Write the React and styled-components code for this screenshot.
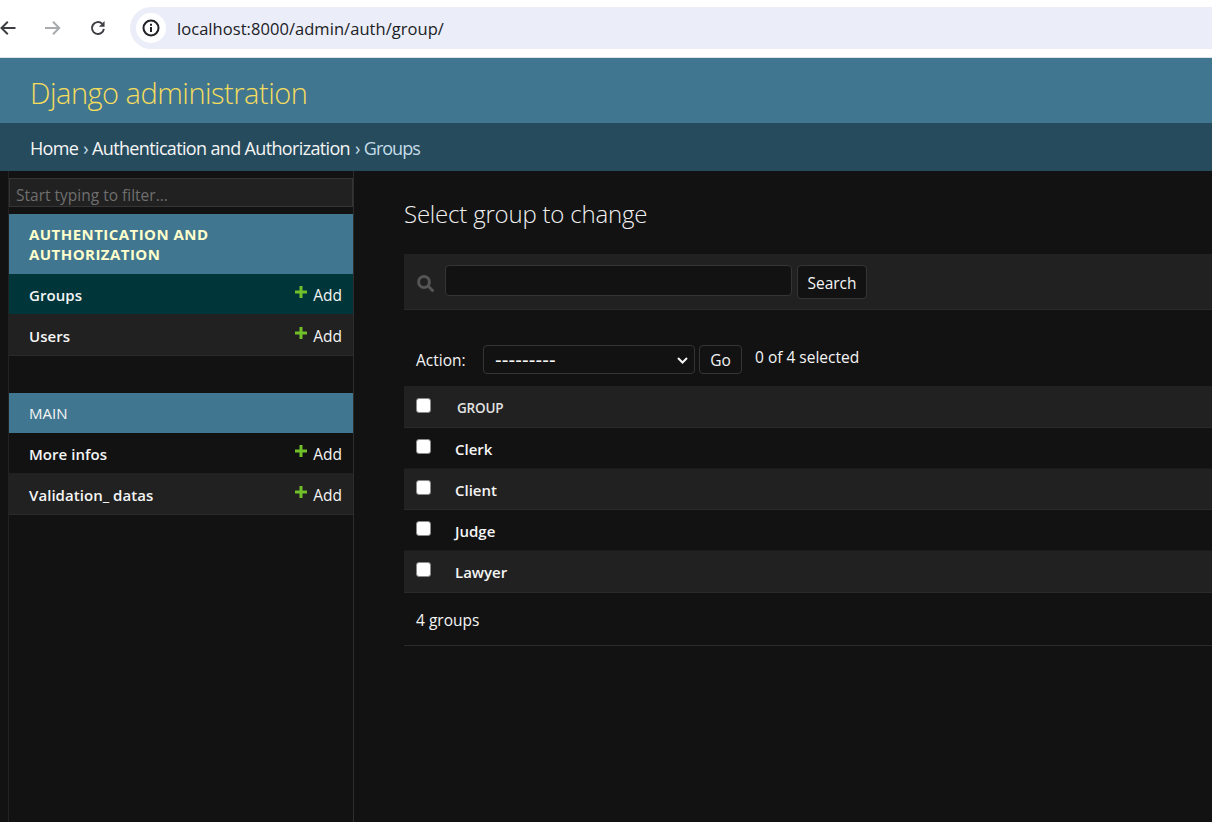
import React from "react";
import styled, { createGlobalStyle } from "styled-components";

const GlobalStyle = createGlobalStyle`
  html, body {
    margin: 0;
    height: 100%;
    overflow: hidden;
    background: #121212;
    font-family: "Open Sans", "Noto Sans", sans-serif;
    color: #f5f5f5;
  }
  * { box-sizing: border-box; }
`;

const Page = styled.div`
  width: 1212px;
  height: 822px;
  display: flex;
  flex-direction: column;
  overflow: hidden;
`;

const BrowserBar = styled.div`
  height: 58px;
  flex: none;
  background: #fff;
  border-bottom: 1px solid #dfe3e8;
  display: flex;
  align-items: flex-start;
  padding-top: 7px;
`;

const NavIcons = styled.div`
  width: 130px;
  height: 42px;
  flex: none;
  display: flex;
  align-items: center;
  gap: 29px;
`;

const Omnibox = styled.div`
  flex: 1;
  height: 42px;
  margin-right: -40px;
  padding-left: 6px;
  border-radius: 21px;
  background: #ebeef8;
  display: flex;
  align-items: center;
  gap: 11px;
`;

const InfoBadge = styled.div`
  width: 30px;
  height: 30px;
  border-radius: 50%;
  background: #fff;
  display: flex;
  align-items: center;
  justify-content: center;
`;

const Url = styled.span`
  font-size: 16.5px;
  letter-spacing: 0.05px;
  color: #202124;
`;

const Header = styled.header`
  height: 65px;
  flex: none;
  background: #417690;
  padding: 3px 30px 0;
  display: flex;
  align-items: center;
`;

const Branding = styled.h1`
  margin: 0;
  font-size: 29px;
  font-weight: 300;
  letter-spacing: -0.5px;
  color: #f5dd5d;
`;

const Breadcrumbs = styled.nav`
  height: 48px;
  flex: none;
  background: #264b5d;
  padding: 2px 30px 0;
  display: flex;
  align-items: center;
  font-size: 18px;
  letter-spacing: -0.65px;
  color: #c4dce8;
  white-space: pre;
`;

const Crumb = styled.a`
  color: #f5f5f5;
`;

const Separator = styled.span`
  padding-left: 1px;
`;

const CurrentCrumb = styled.span`
  letter-spacing: -1px;
`;

const Body = styled.div`
  flex: 1;
  display: flex;
  min-height: 0;
`;

const Sidebar = styled.aside`
  flex: none;
  width: 346px;
  margin-left: 8px;
  border-left: 1px solid #222;
  border-right: 1px solid #2d2d2d;
  padding-top: 7px;
`;

const Filter = styled.input`
  display: block;
  width: 100%;
  height: 29px;
  padding: 4px 6px 0;
  border: 1px solid #353535;
  background: #212121;
  font-family: inherit;
  font-size: 15.5px;
  &::placeholder {
    color: #6f6f6f;
    opacity: 1;
  }
`;

const Module = styled.section`
  margin-top: ${(p) => p.$gap}px;
`;

const Caption = styled.div`
  padding: 10px 60px 10px 20px;
  background: #417690;
  font-size: 15px;
  line-height: 20px;
  text-transform: uppercase;
  letter-spacing: ${(p) => (p.$current ? "0.45px" : "0")};
  font-weight: ${(p) => (p.$current ? 700 : 400)};
  color: ${(p) => (p.$current ? "#ffffcc" : "#f5f5f5")};
`;

const ModelRow = styled.div`
  height: ${(p) => (p.$alt ? 42 : 40)}px;
  padding: ${(p) => (p.$alt ? 3 : 2)}px 11px 0 20px;
  display: flex;
  align-items: center;
  justify-content: space-between;
  background: ${(p) => (p.$active ? "#003539" : p.$alt ? "#212121" : "#121212")};
  border-bottom: ${(p) => (p.$alt ? "1px solid #2a2a2a" : "none")};
`;

const ModelName = styled.a`
  font-size: 15px;
  letter-spacing: 0.05px;
  font-weight: 600;
  color: #f5f5f5;
`;

const AddLink = styled.a`
  display: flex;
  align-items: center;
  gap: 6px;
  font-size: 15.5px;
  color: #f5f5f5;
`;

const PlusIcon = styled.svg`
  width: 12px;
  height: 12px;
  position: relative;
  top: -3px;
  fill: #70bf2b;
`;

const Content = styled.main`
  flex: 1;
  min-width: 0;
  padding: 28px 0 0 50px;
`;

const Title = styled.h2`
  margin: 0 0 23px;
  height: 32px;
  font-size: 24px;
  line-height: 30px;
  font-weight: 300;
  letter-spacing: -0.2px;
  color: #f0f0f0;
`;

const Toolbar = styled.div`
  height: 56px;
  background: #212121;
  border-bottom: 1px solid #2a2a2a;
  padding: 11px 0 0 13px;
  display: flex;
  align-items: flex-start;
`;

const SearchIcon = styled.svg`
  width: 17px;
  height: 17px;
  margin: 10px 11px 0 0;
  flex: none;
`;

const SearchInput = styled.input`
  width: 347px;
  height: 31px;
  background: #121212;
  border: 1px solid #353535;
  border-radius: 4px;
`;

const Button = styled.button`
  height: ${(p) => p.$h}px;
  padding: ${(p) => p.$pt || 0}px 0 0;
  width: ${(p) => p.$w}px;
  background: #121212;
  border: 1px solid #353535;
  border-radius: 4px;
  color: #f5f5f5;
  font-family: inherit;
  font-size: 15.5px;
  margin-left: ${(p) => p.$ml}px;
`;

const Actions = styled.div`
  height: 76px;
  padding: 35px 0 0 12px;
  display: flex;
  align-items: flex-start;
  font-size: 15.5px;
`;

const ActionLabel = styled.label`
  width: 67px;
  flex: none;
  line-height: 30px;
`;

const SelectWrap = styled.div`
  position: relative;
  width: 212px;
  height: 29px;
  flex: none;
`;

const ActionSelect = styled.select`
  appearance: none;
  width: 100%;
  height: 100%;
  padding: 0 11px;
  background: #121212;
  border: 1px solid #353535;
  border-radius: 4px;
  color: #f5f5f5;
  font-family: "Liberation Sans", sans-serif;
  font-size: 20px;
  letter-spacing: 0.1px;
`;

const Chevron = styled.svg`
  position: absolute;
  top: 12px;
  right: 7px;
  width: 11px;
  height: 7px;
  pointer-events: none;
`;

const Counter = styled.span`
  margin-left: 13px;
  line-height: 24px;
`;

const Table = styled.div`
  display: flex;
  flex-direction: column;
`;

const Row = styled.div`
  height: ${(p) => (p.$head ? 42 : p.$last ? 42 : 41)}px;
  display: flex;
  background: ${(p) => (p.$alt ? "#212121" : "#121212")};
  border-bottom: 1px solid ${(p) => (p.$alt ? "#2a2a2a" : "#1a1a1a")};
`;

const CheckCell = styled.div`
  width: 50px;
  flex: none;
  padding: ${(p) => (p.$head ? 12 : 11)}px 0 0 12px;
`;

const Check = styled.input`
  appearance: none;
  display: block;
  margin: 0;
  width: 15px;
  height: 15px;
  background: #fff;
  border: 1.5px solid #8a8a8a;
  border-radius: 3px;
`;

const HeadLabel = styled.span`
  margin-left: 3px;
  padding-top: 2px;
  font-size: 13.5px;
  line-height: 41px;
  font-weight: 600;
  letter-spacing: -0.2px;
  color: #e2e2e2;
`;

const GroupName = styled.a`
  margin-left: 1px;
  padding-top: 1px;
  font-size: 15px;
  line-height: 41px;
  font-weight: 600;
  color: #f5f5f5;
`;

const Paginator = styled.div`
  height: 53px;
  padding-left: 12px;
  border-bottom: 1px solid #2a2a2a;
  font-size: 15.5px;
  line-height: 54px;
`;

const groupsModels = [
  { name: "Groups", active: true },
  { name: "Users", alt: true },
];
const mainModels = [{ name: "More infos" }, { name: "Validation_ datas", alt: true }];
const groups = ["Clerk", "Client", "Judge", "Lawyer"];

const Plus = () => (
  <PlusIcon viewBox="0 0 12 12">
    <path d="M4.5 0h3v4.5H12v3H7.5V12h-3V7.5H0v-3h4.5z" />
  </PlusIcon>
);

const Model = ({ name, active, alt }) => (
  <ModelRow $active={active} $alt={alt}>
    <ModelName>{name}</ModelName>
    <AddLink>
      <Plus />
      Add
    </AddLink>
  </ModelRow>
);

const App = () => {
  return (
    <Page>
      <GlobalStyle />
      <BrowserBar>
        <NavIcons>
          <svg width="16" height="16" viewBox="0 0 16 16" fill="none" stroke="#3c3e41" strokeWidth="2">
            <path d="M15.5 8H1.5M7.8 1.8 1.5 8l6.3 6.2" />
          </svg>
          <svg width="16" height="16" viewBox="0 0 16 16" fill="none" stroke="#a9abae" strokeWidth="2">
            <path d="M0 8h14M8 1.8 14.2 8 8 14.2" />
          </svg>
          <svg width="16" height="16" viewBox="0 0 18 18" fill="none" stroke="#3c3e41" strokeWidth="2.2">
            <path d="M15.6 10a6.7 6.7 0 1 1-2-5.8" />
            <path d="M16.4 1.2v6.4H10z" fill="#3c3e41" stroke="none" />
          </svg>
        </NavIcons>
        <Omnibox>
          <InfoBadge>
            <svg width="18" height="18" viewBox="0 0 18 18" fill="none">
              <circle cx="9" cy="9" r="7.5" stroke="#202124" strokeWidth="2" />
              <path d="M8 8h2v5H8zM8 4.8h2v2H8z" fill="#202124" />
            </svg>
          </InfoBadge>
          <Url>localhost:8000/admin/auth/group/</Url>
        </Omnibox>
      </BrowserBar>
      <Header>
        <Branding>Django administration</Branding>
      </Header>
      <Breadcrumbs>
        <Crumb>Home</Crumb>
        <Separator> › </Separator>
        <Crumb>Authentication and Authorization</Crumb>
        <Separator> › </Separator>
        <CurrentCrumb>Groups</CurrentCrumb>
      </Breadcrumbs>
      <Body>
        <Sidebar>
          <Filter placeholder="Start typing to filter..." />
          <Module $gap={7}>
            <Caption $current>Authentication and Authorization</Caption>
            {groupsModels.map((m) => (
              <Model key={m.name} {...m} />
            ))}
          </Module>
          <Module $gap={37}>
            <Caption>Main</Caption>
            {mainModels.map((m) => (
              <Model key={m.name} {...m} />
            ))}
          </Module>
        </Sidebar>
        <Content>
          <Title>Select group to change</Title>
          <Toolbar>
            <SearchIcon viewBox="0 0 17 17" fill="none" stroke="#555" strokeWidth="3">
              <circle cx="7" cy="7" r="5.4" />
              <path d="M11.5 11.5 15.5 15.5" strokeLinecap="round" />
            </SearchIcon>
            <SearchInput />
            <Button $w={70} $h={34} $ml={5} $pt={2}>
              Search
            </Button>
          </Toolbar>
          <Actions>
            <ActionLabel>Action:</ActionLabel>
            <SelectWrap>
              <ActionSelect defaultValue="">
                <option value="">---------</option>
              </ActionSelect>
              <Chevron viewBox="0 0 11 7" fill="none" stroke="#f5f5f5" strokeWidth="2">
                <path d="M1 1l4.5 4.5L10 1" />
              </Chevron>
            </SelectWrap>
            <Button $w={43} $h={29} $ml={4}>
              Go
            </Button>
            <Counter>0 of 4 selected</Counter>
          </Actions>
          <Table>
            <Row $head $alt>
              <CheckCell $head>
                <Check type="checkbox" />
              </CheckCell>
              <HeadLabel>GROUP</HeadLabel>
            </Row>
            {groups.map((g, i) => (
              <Row key={g} $alt={i % 2 === 1} $last={i === groups.length - 1}>
                <CheckCell>
                  <Check type="checkbox" />
                </CheckCell>
                <GroupName>{g}</GroupName>
              </Row>
            ))}
          </Table>
          <Paginator>4 groups</Paginator>
        </Content>
      </Body>
    </Page>
  );
};

export default App;
